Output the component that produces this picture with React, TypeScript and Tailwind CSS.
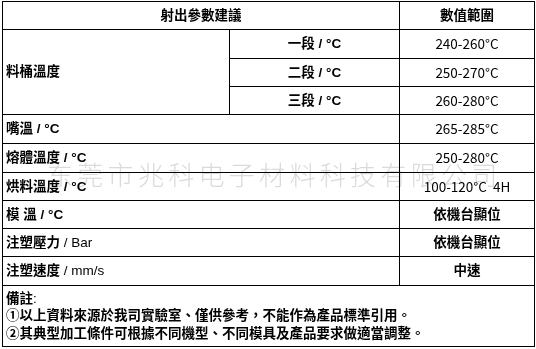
import React from "react";

const CJK = "font-['Liberation_Sans','Noto_Sans_CJK_TC',sans-serif]";
const VAL = "font-['Noto_Sans_CJK_JP','Noto_Sans_CJK_TC',sans-serif]";

function Label({ zh, unit, bold = true }: { zh: string; unit: string; bold?: boolean }) {
  return (
    <span className="whitespace-pre">
      <span className="font-bold">{zh}</span>
      <span className={bold ? "font-bold" : "font-normal"}> / </span>
      <span className={unit === "°C" ? "font-bold" : "font-normal"}>{unit}</span>
    </span>
  );
}

function Cell({ children, className = "" }: { children: React.ReactNode; className?: string }) {
  return <div className={`bg-white flex items-center ${className}`}>{children}</div>;
}

export default function App() {
  return (
    <div className={`relative w-[536px] h-[349px] bg-white text-black text-[13.5px] leading-none ${CJK}`}>
      <div className="pl-[2px] pt-[1px]">
        <div className="grid w-[533px] grid-cols-[226px_169px_134px] grid-rows-[27px_28px_27px_27px_28px_28px_27px_27px_27px_28px_60px] gap-px bg-black p-px">
          <Cell className="col-span-2 justify-center font-bold">射出參數建議</Cell>
          <Cell className="justify-center font-bold">數值範圍</Cell>

          <Cell className="row-span-3 pl-[3px] font-bold">料桶溫度</Cell>
          <Cell className="justify-center"><Label zh="一段" unit="°C" /></Cell>
          <Cell className={`justify-center ${VAL}`}>240-260°C</Cell>
          <Cell className="justify-center"><Label zh="二段" unit="°C" /></Cell>
          <Cell className={`justify-center ${VAL}`}>250-270°C</Cell>
          <Cell className="justify-center"><Label zh="三段" unit="°C" /></Cell>
          <Cell className={`justify-center ${VAL}`}>260-280°C</Cell>

          <Cell className="col-span-2 pl-[3px]"><Label zh="嘴溫" unit="°C" /></Cell>
          <Cell className={`justify-center ${VAL}`}>265-285°C</Cell>

          <Cell className="col-span-2 pl-[3px]"><Label zh="熔體溫度" unit="°C" /></Cell>
          <Cell className={`justify-center ${VAL}`}>250-280°C</Cell>

          <Cell className="col-span-2 pl-[3px]"><Label zh="烘料溫度" unit="°C" /></Cell>
          <Cell className={`justify-center whitespace-pre ${VAL}`}>100-120°C  4H</Cell>

          <Cell className="col-span-2 pl-[3px]"><Label zh="模 溫" unit="°C" /></Cell>
          <Cell className="justify-center font-bold">依機台顯位</Cell>

          <Cell className="col-span-2 pl-[3px]"><Label zh="注塑壓力" unit="Bar" bold={false} /></Cell>
          <Cell className="justify-center font-bold">依機台顯位</Cell>

          <Cell className="col-span-2 pl-[3px]"><Label zh="注塑速度" unit="mm/s" bold={false} /></Cell>
          <Cell className="justify-center font-bold">中速</Cell>

          <Cell className="col-span-3 pl-[3px]">
            <div className="flex flex-col leading-[17.5px]">
              <div><span className="font-bold">備註</span>:</div>
              <div className="font-bold">①以上資料來源於我司實驗室、僅供參考，不能作為產品標準引用。</div>
              <div className="font-bold">②其典型加工條件可根據不同機型、不同模具及產品要求做適當調整。</div>
            </div>
          </Cell>
        </div>
      </div>
      <div className="pointer-events-none absolute left-[47px] top-[161px] whitespace-nowrap text-[26px] leading-none tracking-[4.3px] font-light text-[#dadada] mix-blend-multiply font-['Noto_Sans_CJK_SC',sans-serif]">
        东莞市兆科电子材料科技有限公司
      </div>
    </div>
  );
}
